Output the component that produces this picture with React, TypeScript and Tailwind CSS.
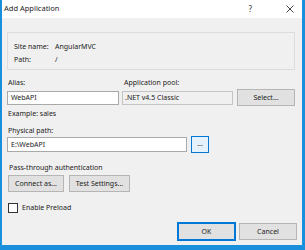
import React from "react";

const inputCls = "h-[14px] border border-[#a9a9a9] bg-white flex items-center px-[3px]";
const btnCls = "h-[17px] border border-[#b5b5b5] bg-[#e1e1e1] flex items-center justify-center";

const App = () => {
  return (
    <div className="w-[305px] h-[250px] flex flex-col bg-[#f0f0f0] border-l-2 border-r-[3px] border-b-[5px] border-[#1a8fdb] font-['Noto_Sans',sans-serif] text-[7px] leading-none text-[#1b1b1b]">
      {/* title bar */}
      <div className="h-[18px] shrink-0 bg-white flex items-center pl-[2px]">
        <span className="text-[7.5px]">Add Application</span>
        <span className="ml-auto mr-[34px] text-[8px] text-[#333]">?</span>
        <svg width="8" height="8" viewBox="0 0 8 8" className="mr-[8px]">
          <path d="M0.5 0.5 L7.5 7.5 M7.5 0.5 L0.5 7.5" stroke="#333" strokeWidth="0.9" />
        </svg>
      </div>

      {/* site info */}
      <div className="mt-[14px] ml-[5px] mr-[7px] h-[38px] border border-[#dcdcdc] pt-[7px] pl-[6px]">
        <div className="h-[13px] flex items-center">
          <span className="w-[41px]">Site name:</span>
          <span>AngularMVC</span>
        </div>
        <div className="h-[13px] flex items-center">
          <span className="w-[41px]">Path:</span>
          <span>/</span>
        </div>
      </div>

      {/* alias and pool */}
      <div className="mt-[6px] h-[12px] flex items-center">
        <span className="ml-[6px] w-[116px]">Alias:</span>
        <span>Application pool:</span>
      </div>
      <div className="h-[19px] flex items-center">
        <div className={`${inputCls} ml-[5px] w-[112px]`}>WebAPI</div>
        <div className="h-[14px] ml-[3px] w-[111px] border border-[#c4c4c4] bg-[#f0f0f0] flex items-center px-[2px]">.NET v4.5 Classic</div>
        <div className={`${btnCls} ml-[4px] w-[58px]`}>Select...</div>
      </div>
      <div className="h-[12px] flex items-center pl-[6px]">Example: sales</div>

      {/* physical path */}
      <div className="mt-[6px] h-[11px] flex items-center pl-[6px]">Physical path:</div>
      <div className="h-[17px] flex items-center">
        <div className={`${inputCls} h-[15px] ml-[5px] w-[180px]`}>E:\WebAPI</div>
        <div className="ml-[4px] w-[18px] h-[17px] border border-[#0078d7] bg-[#e5f1fb] flex items-center justify-center pb-[3px]">...</div>
      </div>

      {/* pass-through */}
      <div className="mt-[8px] h-[12px] flex items-center pl-[7px]">Pass-through authentication</div>
      <div className="mt-[2px] flex items-center">
        <div className={`${btnCls} ml-[6px] w-[56px]`}>Connect as...</div>
        <div className={`${btnCls} ml-[5px] w-[61px]`}>Test Settings...</div>
      </div>

      {/* preload */}
      <div className="mt-[9px] h-[13px] flex items-center pl-[6px]">
        <div className="w-[10px] h-[10px] border border-[#333] bg-white" />
        <span className="ml-[4px]">Enable Preload</span>
      </div>

      {/* footer */}
      <div className="mt-[8px] h-[19px] flex items-center justify-end pr-[5px]">
        <div className="h-[19px] w-[59px] border-2 border-[#0078d7] bg-[#e1e1e1] flex items-center justify-center">OK</div>
        <div className={`${btnCls} ml-[3px] w-[58px]`}>Cancel</div>
      </div>
    </div>
  );
};

export default App;
